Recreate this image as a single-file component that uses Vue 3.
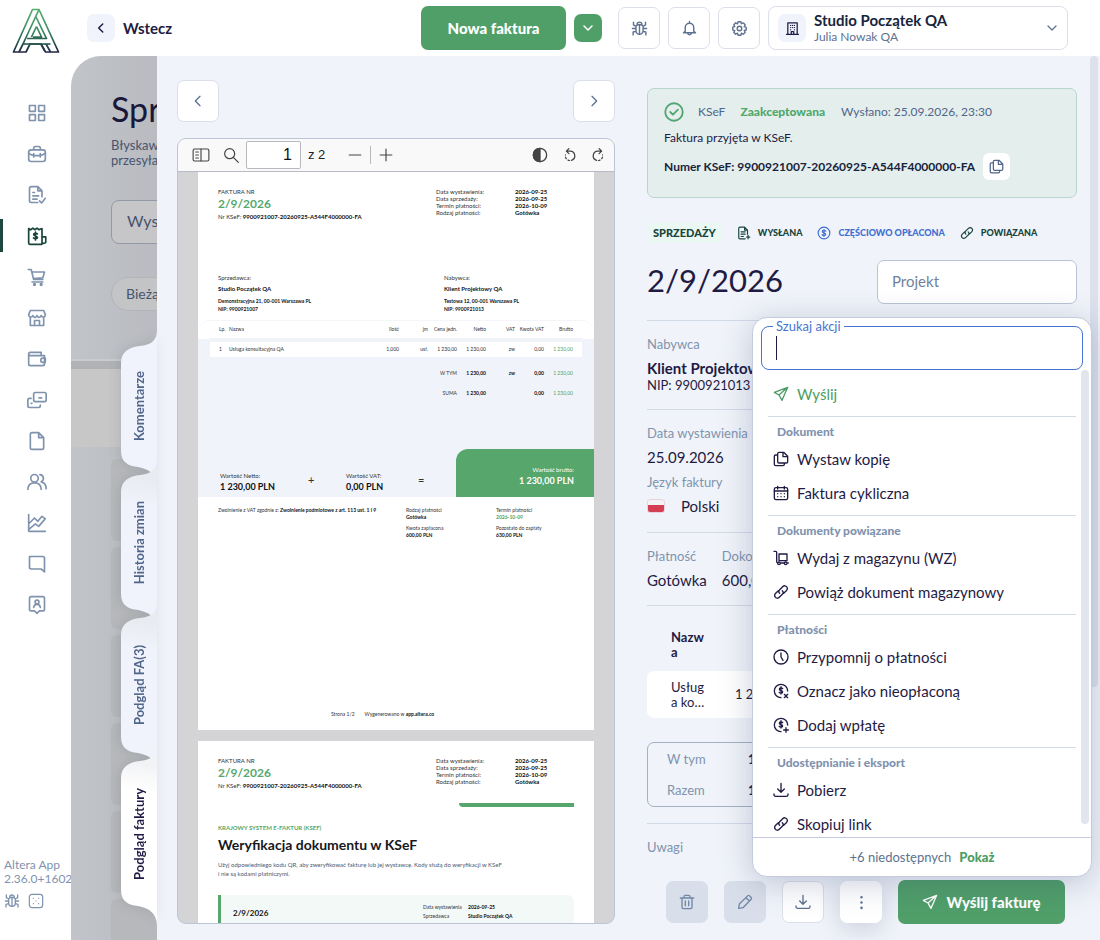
<script setup>
import { h, ref } from 'vue'

const icons = {
  grid: '<rect x="3" y="3" width="7" height="7"/><rect x="14" y="3" width="7" height="7"/><rect x="3" y="14" width="7" height="7"/><rect x="14" y="14" width="7" height="7"/>',
  briefcase: '<rect x="2" y="7" width="20" height="14" rx="3"/><path d="M8 7V5a2 2 0 0 1 2-2h4a2 2 0 0 1 2 2v2M2 11c3 3 6 3 10 3s7 0 10-3M8 11.500v4M16 11.500v4"/>',
  docCheck: '<path d="M13 21H5a2 2 0 0 1-2-2V4a2 2 0 0 1 2-2h8l5 5v7M13 2v5h5M7 9h2M7 13h7M7 17h5M15 19l2.500 2.500L22 16"/>',
  invoice: '<path d="M2 3l2.500 1.500L7 2.500l2.500 2L12 2.500l2.500 2L18 3v19H4a2 2 0 0 1-2-2zM18 13h4.500v6.500a2.500 2.500 0 0 1-4.500 0"/><path d="M12.500 9.500c-.7-1-4.500-1.200-4.500.8 0 2.200 4.500 1.200 4.500 3.400 0 2-3.800 2-4.700.6M10.200 7.300v9.400"/>',
  cart: '<path d="M1.500 3H5l3 12h11M6 6h15l-2 7L7.500 14"/><path d="M6 18h13"/><circle cx="9" cy="21" r="1"/><circle cx="17" cy="21" r="1"/>',
  shop: '<path d="M4 3h16l2 5c0 3-4 4-5 1-1 3-4 3-5 0-1 3-4 3-5 0-1 3-5 2-5-1zM4 11v10h16V11M9 21v-6h6v6"/>',
  wallet: '<path d="M2 6a2 2 0 0 1 2-2h13v4M2 6v12a2 2 0 0 0 2 2h15a2 2 0 0 0 2-2V8H4a2 2 0 0 1-2-2zM22 11h-3a2.500 2.500 0 0 0 0 5h3z"/>',
  cards: '<rect x="8" y="3" width="15" height="11" rx="2"/><path d="M5 10H3a2 2 0 0 0-2 2v7a2 2 0 0 0 2 2h11a2 2 0 0 0 2-2v-1M14.500 9.500h3M5 16h1"/>',
  file: '<path d="M14 2H6a2 2 0 0 0-2 2v16a2 2 0 0 0 2 2h12a2 2 0 0 0 2-2V8zM14 2v6h6"/>',
  users: '<circle cx="9" cy="7.500" r="4.500"/><path d="M1 21c0-5 3-8 8-8s8 3 8 8M15.500 3.200a4.500 4.500 0 0 1 1.500 8.600c3.500.7 6 4 6 8.200"/>',
  chart: '<path d="M2 2v20h20M3 12l6-6 4 4 5-6 4 3M3 19l7-6 4 3 7-8"/>',
  chat: '<path d="M3 3h16a2 2 0 0 1 2 2v16.500L17 18H5a2 2 0 0 1-2-2z"/>',
  contact: '<path d="M5 2h14a2 2 0 0 1 2 2v13a2 2 0 0 1-2 2h-4l-3 3-3-3H5a2 2 0 0 1-2-2V4a2 2 0 0 1 2-2z"/><circle cx="12" cy="8.500" r="2.300"/><path d="M8 15c.5-5 7.500-5 8 0"/>',
  bug: '<path d="M8.500 6.500a3.500 3.500 0 0 1 7 0M7 8.500c3-2.500 7-2.500 10 0v6.500a5 5 0 0 1-10 0zM12 8v12M7 12H2M7 16l-4 1v4M7 9L3.500 7V3M17 12h5M17 16l4 1v4M17 9l3.500-2V3"/>',
  dice: '<rect x="2" y="2" width="20" height="20" rx="4"/><path d="M8 8h.1M16 8h.1M12 12h.1M8 16h.1M16 16h.1"/>',
  left: '<path d="M15 5l-7 7 7 7"/>',
  right: '<path d="M9 5l7 7-7 7"/>',
  down: '<path d="M4 8l8 8 8-8"/>',
  bell: '<path d="M12 2v2M6 16v-5.500a6 6 0 0 1 12 0V16l2.500 2H3.500zM9.500 18.500a2.500 2.500 0 0 0 5 0"/>',
  gear: '<circle cx="12" cy="12" r="3.200"/><path d="M10 2.500h4l.8 2.700 2.800-1.100 2.500 2.900-1.500 2.400 2.900 1.100v3.600l-2.800.7 1.300 2.700-2.700 2.600-2.500-1.500-.9 2.900h-3.800l-.9-2.800-2.700 1.400-2.600-2.700 1.400-2.500-2.800-.9V10l2.800-.8L4 6.600l2.600-2.700L9.200 5.400z"/>',
  building: '<path d="M4.500 21.500V3h15v18.500M2.500 21.500h19M10 21v-4h4v4"/><path d="M9 7h.1M12 7h.1M15 7h.1M9 10.500h.1M12 10.500h.1M15 10.500h.1M9 14h.1M15 14h.1"/>',
  copy: '<path d="M9 2h7l6 6v8a2 2 0 0 1-2 2H9a2 2 0 0 1-2-2V4a2 2 0 0 1 2-2zM15 2v6.500h7M7 6H4a2 2 0 0 0-2 2v12a2 2 0 0 0 2 2h11a2 2 0 0 0 2-2v-2"/>',
  okCircle: '<circle cx="12" cy="12" r="10.500"/><path d="M7.500 12l3.200 3.200 6-6"/>',
  docOut: '<path d="M14 22H5a2 2 0 0 1-2-2V4a2 2 0 0 1 2-2h8l5 5v7M13 2v5h5M7 10h7M7 14h7M7 18h4M19 22v-6M16.500 19H22"/>',
  coin: '<circle cx="12" cy="12" r="10"/><path d="M15 9c-1-2-6-2-6 .5 0 3 6 1.800 6 4.800 0 2.800-5 2.500-6.200.5M12 6v12"/>',
  link: '<path d="M10 14c-2-2-1.500-4 0-5.500l4.500-4.500c4-4 9.500 2 5.500 6l-4 4M14 10c2 2 1.500 4 0 5.500L9.500 20c-4 4-9.500-2-5.500-6l4-4"/>',
  send: '<path d="M22 2L2 9.500l7 4 4.500 8zM22 2L9 13.500"/>',
  calendar: '<rect x="2" y="4" width="20" height="18" rx="2.500"/><path d="M2 9h20M7 2v4M17 2v4"/><path d="M7 13h.1M12 13h.1M17 13h.1M7 17.500h.1M12 17.500h.1M17 17.500h.1"/>',
  trolley: '<path d="M1.500 2H4a1.500 1.500 0 0 1 1.500 1.500V17a2 2 0 0 0 1 2h.5M12 19.500h5M9 6h12v10H9zM22 19.500h1"/><circle cx="9" cy="20" r="2"/><circle cx="19" cy="20" r="2"/>',
  clock: '<circle cx="12" cy="12" r="10.500"/><path d="M12 6v6l3 5"/>',
  coinX: '<path d="M12 22A10 10 0 1 1 22 12"/><path d="M14.500 8.500c-1-1.500-5-1.500-5 .7 0 2.600 5 1.600 5 4.200 0 2.200-4 2.200-5.200.5M12 5.500v11M17 17l5 5M22 17l-5 5"/>',
  coinPlus: '<path d="M12 22A10 10 0 1 1 22 12"/><path d="M14.500 8.500c-1-1.500-5-1.500-5 .7 0 2.600 5 1.600 5 4.200 0 2.200-4 2.200-5.200.5M12 5.500v11M19.500 16v7M16 19.500h7"/>',
  download: '<path d="M12 2v13M7 10.500l5 5 5-5M1.500 18v1a2.500 2.500 0 0 0 2.500 2.500h16a2.500 2.500 0 0 0 2.500-2.500v-1"/>',
  trash: '<path d="M2 6h20M7.500 6V4a2 2 0 0 1 2-2h5a2 2 0 0 1 2 2v2M4.500 6v14a2 2 0 0 0 2 2h11a2 2 0 0 0 2-2V6M9.500 10.500v7M14.500 10.500v7"/>',
  pencil: '<path d="M2.500 21.500l1-6.500L16 2.800a2 2 0 0 1 2.800 0l2.400 2.400a2 2 0 0 1 0 2.800L9 20.500zM13.500 5.500l5 5"/>',
  more: '<path d="M12 3.500v.1M12 12v.1M12 20.500v.1"/>',
  panel: '<rect x="1.500" y="4" width="21" height="16" rx="2"/><path d="M12 4v16M5 8h3.500M5 12h3.500M5 16h3.500"/>',
  search: '<circle cx="10" cy="10" r="7.500"/><path d="M15.500 15.500L23 23"/>',
  minus: '<path d="M2 12h20"/>',
  plus: '<path d="M2 12h20M12 2v20"/>',
  contrast: '<circle cx="12" cy="12" r="10"/><path d="M12 2a10 10 0 0 0 0 20z" fill="currentColor"/>',
  rotL: '<path d="M11 1L7 5l4 4M7.500 5H13a7.500 7.500 0 0 1 2 14.700"/><path d="M12 20a7.500 7.500 0 0 1-6.500-9" stroke-dasharray="2.500 3.500"/>',
  rotR: '<path d="M13 1l4 4-4 4M16.500 5H11a7.500 7.500 0 0 0-2 14.700"/><path d="M12 20a7.500 7.500 0 0 0 6.500-9" stroke-dasharray="2.500 3.500"/>',
}

const Icon = (props) =>
  h('svg', {
    viewBox: '0 0 24 24',
    width: props.size || 18,
    height: props.size || 18,
    fill: 'none',
    stroke: 'currentColor',
    'stroke-width': props.weight || 2,
    'stroke-linecap': 'round',
    'stroke-linejoin': 'round',
    'aria-hidden': 'true',
    innerHTML: icons[props.name],
  })
Icon.props = ['name', 'size', 'weight']

const nav = [
  ['grid', 'Pulpit'], ['briefcase', 'Firma'], ['docCheck', 'Dokumenty'], ['invoice', 'Sprzedaż'],
  ['cart', 'Zakupy'], ['shop', 'Magazyn'], ['wallet', 'Portfel'], ['cards', 'Płatności'],
  ['file', 'Pliki'], ['users', 'Klienci'], ['chart', 'Raporty'], ['chat', 'Wiadomości'], ['contact', 'Kontakt'],
]

const tabs = [
  { label: 'Komentarze', height: 121 },
  { label: 'Historia zmian', height: 135 },
  { label: 'Podgląd FA(3)', height: 135 },
  { label: 'Podgląd faktury', height: 145, active: true },
]
const tabShape = (n) =>
  `M36 -16C36 -4 28 -1 19 0C8 1 0 6 0 17V${n - 16}C0 ${n - 5} 7 ${n - 1} 17 ${n}C28 ${n + 2} 36 ${n + 7} 36 ${n + 20}Z`

const menu = [
  { title: '', items: [['send', 'Wyślij']] },
  { title: 'Dokument', items: [['copy', 'Wystaw kopię'], ['calendar', 'Faktura cykliczna']] },
  { title: 'Dokumenty powiązane', items: [['trolley', 'Wydaj z magazynu (WZ)'], ['link', 'Powiąż dokument magazynowy']] },
  { title: 'Płatności', items: [['clock', 'Przypomnij o płatności'], ['coinX', 'Oznacz jako nieopłaconą'], ['coinPlus', 'Dodaj wpłatę']] },
  { title: 'Udostępnianie i eksport', items: [['download', 'Pobierz'], ['link', 'Skopiuj link']] },
]

const dates = [
  ['Data wystawienia:', '2026-09-25'],
  ['Data sprzedaży:', '2026-09-25'],
  ['Termin płatności:', '2026-10-09'],
  ['Rodzaj płatności:', 'Gotówka'],
]
const query = ref('')
const project = ref('')
const page = ref('1')
</script>

<template>
  <div class="app">
    <aside class="side">
      <a class="logo" href="#" aria-label="Altera">
        <svg viewBox="0 0 48 46" width="48" height="46" fill="none" stroke="url(#brand)" stroke-width="1.700" stroke-linejoin="round">
          <defs>
            <linearGradient id="brand" gradientUnits="userSpaceOnUse" x1="0" y1="0" x2="0" y2="46">
              <stop offset="0" stop-color="#55b06c" /><stop offset=".5" stop-color="#3b8a63" />
              <stop offset=".8" stop-color="#1f4a48" /><stop offset="1" stop-color="#211d45" />
            </linearGradient>
          </defs>
          <path d="M20.500 1.500H27L46.500 44H33.500L29 36H18L14 44H1.500z" />
          <path d="M27 1.500L11 36H38.500M24 9L34.500 30.500H15M24.500 18.500L19.500 29M24.500 18.500L29.500 29H21M11 36L7 44M29 36L32.500 42.500M34 36L38.500 44" />
        </svg>
      </a>
      <nav class="nav">
        <a v-for="[icon, name] in nav" :key="icon" href="#" :class="{ on: icon === 'invoice' }" :aria-label="name">
          <Icon :name="icon" :size="20" />
        </a>
      </nav>
      <div class="version">
        <p>Altera App</p>
        <p>2.36.0+1602</p>
        <div class="version-icons"><Icon name="bug" :size="16" /><Icon name="dice" :size="16" weight="1.800" /></div>
      </div>
    </aside>

    <header class="top">
      <button class="back"><span><Icon name="left" :size="14" weight="2.500" /></span>Wstecz</button>
      <button class="primary new">Nowa faktura</button>
      <button class="primary split" aria-label="Więcej"><Icon name="down" :size="12" weight="3" /></button>
      <div class="tools">
        <button class="square" aria-label="Zgłoś błąd"><Icon name="bug" :size="17" /></button>
        <button class="square" aria-label="Powiadomienia"><Icon name="bell" :size="17" /></button>
        <button class="square" aria-label="Ustawienia"><Icon name="gear" :size="17" /></button>
      </div>
      <button class="account">
        <span class="avatar"><Icon name="building" :size="15" /></span>
        <span class="who"><b>Studio Początek QA</b><small>Julia Nowak QA</small></span>
        <Icon name="down" :size="12" weight="2.500" />
      </button>
    </header>

    <main class="main">
      <section class="under">
        <h1>Sprzedaż</h1>
        <p>Błyskawicznie<br />przesyłaj</p>
        <div class="u-search">Wyszukaj</div>
        <div class="u-chip">Bieżący</div>
        <div class="u-track"></div>
        <div class="u-band"></div>
        <div v-for="n in 6" :key="n" class="u-card"></div>
      </section>

      <section class="drawer">
        <nav class="tabs">
          <button v-for="(t, i) in tabs" :key="t.label" :class="{ on: t.active }" :style="{ height: t.height + 'px' }">
            <svg width="36" :height="t.height" aria-hidden="true">
              <defs>
                <linearGradient :id="'tab' + i" gradientUnits="userSpaceOnUse" x1="4" y1="0" x2="0" y2="28">
                  <stop offset="0" :stop-color="t.active ? '#f2f3f5' : i ? '#e8ebf0' : '#f0f3fb'" />
                  <stop offset="1" :stop-color="t.active ? '#ffffff' : '#f0f3fb'" />
                </linearGradient>
              </defs>
              <path :d="tabShape(t.height)" :fill="`url(#tab${i})`" />
            </svg>
            <span>{{ t.label }}</span>
          </button>
        </nav>

        <div class="preview">
          <div class="pager">
            <button class="square" aria-label="Poprzednia"><Icon name="left" :size="16" /></button>
            <button class="square" aria-label="Następna"><Icon name="right" :size="16" /></button>
          </div>
          <div class="viewer">
            <div class="bar">
              <Icon name="panel" :size="18" weight="1.500" />
              <Icon name="search" :size="16" weight="1.800" />
              <input v-model="page" aria-label="Strona" />
              <span class="of">z 2</span>
              <Icon name="minus" :size="14" />
              <i></i>
              <Icon name="plus" :size="14" />
              <span class="bar-right">
                <Icon name="contrast" :size="16" /><Icon name="rotL" :size="15" /><Icon name="rotR" :size="15" />
              </span>
            </div>
            <div class="canvas">
              <article class="sheet">
                <div class="s-head">
                  <div>
                    <p>FAKTURA NR</p>
                    <h3>2/9/2026</h3>
                    <p>Nr KSeF: <b>9900921007-20260925-A544F4000000-FA</b></p>
                  </div>
                  <dl><template v-for="[k, v] in dates" :key="k"><dt>{{ k }}</dt><dd>{{ v }}</dd></template></dl>
                </div>
                <div class="parties">
                  <div><p>Sprzedawca:</p><h4>Studio Początek QA</h4><b>Demonstracyjna 21, 00-001 Warszawa PL<br />NIP: 9900921007</b></div>
                  <div><p>Nabywca:</p><h4>Klient Projektowy QA</h4><b>Testowa 12, 00-001 Warszawa PL<br />NIP: 9900921013</b></div>
                </div>
                <div class="lines">
                  <table>
                    <colgroup><col class="c1" /><col /><col class="c3" /><col class="c4" /><col class="c4" /><col class="c4" /><col class="c4" /><col class="c4" /><col class="c4" /></colgroup>
                    <thead><tr><th>Lp.</th><th>Nazwa</th><th>Ilość</th><th>jm</th><th>Cena jedn.</th><th>Netto</th><th>VAT</th><th>Kwota VAT</th><th>Brutto</th></tr></thead>
                    <tbody>
                      <tr class="item"><td>1</td><td>Usługa konsultacyjna QA</td><td>1,000</td><td>usł.</td><td>1 230,00</td><td>1 230,00</td><td>zw</td><td>0,00</td><td class="g">1 230,00</td></tr>
                      <tr class="sum"><td colspan="5">W TYM</td><td><b>1 230,00</b></td><td><b>zw</b></td><td><b>0,00</b></td><td class="g">1 230,00</td></tr>
                      <tr class="sum"><td colspan="5">SUMA</td><td><b>1 230,00</b></td><td></td><td><b>0,00</b></td><td class="g">1 230,00</td></tr>
                    </tbody>
                  </table>
                  <div class="totals">
                    <div><p>Wartość Netto:</p><b>1 230,00 PLN</b></div>
                    <span>+</span>
                    <div><p>Wartość VAT:</p><b>0,00 PLN</b></div>
                    <span>=</span>
                    <div class="gross"><p>Wartość brutto:</p><b>1 230,00 PLN</b></div>
                  </div>
                </div>
                <div class="terms">
                  <p>Zwolnienie z VAT zgodnie z: <b>Zwolnienie podmiotowe z art. 113 ust. 1 i 9</b></p>
                  <div><p>Rodzaj płatności</p><b>Gotówka</b><p>Kwota zapłacona</p><b>600,00 PLN</b></div>
                  <div><p>Termin płatności</p><b class="g">2026-10-09</b><p>Pozostało do zapłaty</p><b>630,00 PLN</b></div>
                </div>
                <footer><span>Strona 1/2</span><span>Wygenerowano w <b>app.altera.co</b></span></footer>
              </article>

              <article class="sheet second">
                <div class="s-head">
                  <div>
                    <p>FAKTURA NR</p>
                    <h3>2/9/2026</h3>
                    <p>Nr KSeF: <b>9900921007-20260925-A544F4000000-FA</b></p>
                  </div>
                  <dl><template v-for="[k, v] in dates" :key="k"><dt>{{ k }}</dt><dd>{{ v }}</dd></template></dl>
                </div>
                <div class="strip"></div>
                <p class="over">KRAJOWY SYSTEM E-FAKTUR (KSEF)</p>
                <h2>Weryfikacja dokumentu w KSeF</h2>
                <p class="lead">Użyj odpowiedniego kodu QR, aby zweryfikować fakturę lub jej wystawcę. Kody służą do weryfikacji w KSeF<br />i nie są kodami płatniczymi.</p>
                <div class="verify">
                  <b>2/9/2026</b>
                  <dl><dt>Data wystawienia</dt><dd>2026-09-25</dd><dt>Sprzedawca</dt><dd>Studio Początek QA</dd></dl>
                </div>
              </article>
            </div>
          </div>
        </div>

        <div class="detail">
          <div class="scroll">
            <div class="ksef">
              <div class="k-row"><Icon name="okCircle" :size="20" weight="2.200" /><span>KSeF</span><b>Zaakceptowana</b><small>Wysłano: 25.09.2026, 23:30</small></div>
              <p>Faktura przyjęta w KSeF.</p>
              <div class="k-num"><b>Numer KSeF: 9900921007-20260925-A544F4000000-FA</b><button aria-label="Kopiuj"><Icon name="copy" :size="15" /></button></div>
            </div>
            <div class="badges">
              <b class="kind">SPRZEDAŻY</b>
              <span><Icon name="docOut" :size="14" />WYSŁANA</span>
              <span class="blue"><Icon name="coin" :size="14" />CZĘŚCIOWO OPŁACONA</span>
              <span><Icon name="link" :size="14" />POWIĄZANA</span>
            </div>
            <div class="title"><h2>2/9/2026</h2><input v-model="project" placeholder="Projekt" aria-label="Projekt" /></div>
            <div class="block buyer"><h6>Nabywca</h6><b>Klient Projektowy QA</b><p>NIP: 9900921013</p></div>
            <div class="block meta">
              <h6>Data wystawienia</h6><p>25.09.2026</p>
              <h6>Język faktury</h6><p class="lang"><i class="flag"></i>Polski</p>
            </div>
            <div class="block pay">
              <div><h6>Płatność</h6><p>Gotówka</p></div>
              <div><h6>Dokonano</h6><p>600,00</p></div>
            </div>
            <div class="block rows">
              <table>
                <thead><tr><th>Nazwa</th><th></th></tr></thead>
                <tbody><tr><td><span>Usługa konsultacyjna</span></td><td>1 230,00</td></tr></tbody>
              </table>
              <dl><dt>W tym</dt><dd>1 230</dd><dt>Razem</dt><dd>1 230</dd></dl>
            </div>
            <div class="block notes"><h6>Uwagi</h6></div>
          </div>
          <span class="thumb"></span>

          <div class="actions">
            <button class="square muted" aria-label="Usuń"><Icon name="trash" :size="16" /></button>
            <button class="square muted" aria-label="Edytuj"><Icon name="pencil" :size="16" /></button>
            <button class="square" aria-label="Pobierz"><Icon name="download" :size="16" /></button>
            <button class="square glow" aria-label="Więcej akcji"><Icon name="more" :size="15" weight="4" /></button>
            <button class="primary sendbtn"><Icon name="send" :size="16" />Wyślij fakturę</button>

            <div class="menu">
              <div class="find">
                <label for="find">Szukaj akcji</label>
                <input id="find" v-model="query" />
                <i class="caret"></i>
              </div>
              <div class="list">
                <div v-for="(g, i) in menu" :key="i" class="group">
                  <h5 v-if="g.title">{{ g.title }}</h5>
                  <button v-for="[icon, name] in g.items" :key="name" :class="{ go: i === 0 }"><Icon :name="icon" :size="16" />{{ name }}</button>
                </div>
              </div>
              <div class="more">+6 niedostępnych <a href="#">Pokaż</a></div>
              <span class="menu-thumb"></span>
            </div>
          </div>
        </div>
      </section>
    </main>
  </div>
</template>

<style>
body { margin: 0; }
</style>

<style scoped>
.app, .app * { box-sizing: border-box; }
.app {
  display: grid; grid-template: 56px minmax(0, 1fr) / 71px minmax(0, 1fr);
  height: 100vh; overflow: hidden; background: #fff; color: #1f1b44;
  font: 14px/18px Lato, "Open Sans", sans-serif;
}
h1, h2, h3, h4, h5, h6, p, dl, dd { margin: 0; }
button { font: inherit; color: inherit; border: 0; padding: 0; background: none; cursor: pointer; }
a { color: inherit; text-decoration: none; }
svg { flex: none; display: block; }

.side { grid-row: 1 / 3; display: flex; flex-direction: column; }
.logo { padding: 8px 0 0 12px; }
.nav { margin-top: 38px; display: flex; flex-direction: column; color: #8093ae; }
.nav a { height: 41px; display: flex; align-items: center; padding-left: 27px; }
.nav a.on { height: 33px; margin: 4px 0; padding-left: 24px; border-left: 3px solid #1d473f; color: #17443b; }
.version { margin: auto 0 31px 4px; font-size: 12px; line-height: 14px; color: #8093ae; white-space: nowrap; }
.version-icons { display: flex; gap: 8px; margin-top: 7px; }

.top { display: flex; align-items: center; padding: 0 32px 0 16px; gap: 8px; }
.back { display: flex; align-items: center; gap: 8px; font-weight: 700; font-size: 15px; margin-right: auto; }
.back span { width: 28px; height: 28px; border-radius: 7px; background: #f0f3fb; display: grid; place-items: center; }
.primary { background: #509f69; color: #fff; font-weight: 900; font-size: 15px; border-radius: 7px; }
.new { width: 145px; height: 44px; }
.split { width: 28px; height: 28px; display: grid; place-items: center; }
.tools { display: flex; gap: 8px; margin-left: 8px; }
.square { width: 42px; height: 42px; border: 1px solid #dbdfea; border-radius: 7px; background: #fff; color: #5d7290; display: grid; place-items: center; }
.account { width: 300px; height: 44px; border: 1px solid #dbdfea; border-radius: 8px; display: flex; align-items: center; gap: 8px; padding: 0 9px; color: #5d7290; text-align: left; }
.avatar { width: 28px; height: 28px; border-radius: 7px; background: #f0f3fb; color: #1f1b44; display: grid; place-items: center; }
.who { flex: 1; display: flex; flex-direction: column; }
.who b { font-size: 15px; line-height: 17px; color: #17243c; }
.who small { font-size: 12px; line-height: 15px; }

.main { position: relative; min-height: 0; }
.under { height: 100%; overflow: hidden; border-radius: 30px 0 0; background: linear-gradient(90deg, #c1c4c9, #b9bbc0 86px); padding-top: 33px; color: #47546e; white-space: nowrap; }
.under h1 { margin-left: 40px; font-weight: 400; font-size: 34px; line-height: 40px; color: #19173a; }
.under p { margin: 9px 0 0 40px; font-size: 13px; line-height: 15px; }
.u-search { margin: 32px 0 0 40px; height: 44px; border: 1px solid #9499a6; border-radius: 8px; padding: 10px 15px; font-size: 16px; line-height: 20px; background: #c6c6c8; }
.u-chip { margin: 33px 0 0 40px; height: 34px; border: 1px solid #b2b4b9; border-radius: 17px; padding: 7px 14px; background: #c3c4c6; }
.u-track { margin-top: 48px; height: 10px; border-top: 2px solid #cacbcd; background: #b0b2b6; }
.u-band { height: 78px; background: #c7c7c8; margin-bottom: 12px; }
.u-card { margin: 0 0 6px 40px; height: 82px; border-radius: 6px; background: #b6b8bb; }

.drawer { position: absolute; inset: 0 0 0 86px; background: #f0f3f9; display: grid; grid-template-columns: minmax(0, 1fr) 430px; gap: 32px; padding: 0 23px 0 20px; }
.tabs { position: absolute; left: -36px; top: 290px; width: 36px; display: flex; flex-direction: column; gap: 8px; filter: drop-shadow(-2px 0 6px rgba(30, 40, 60, .12)); }
.tabs button { position: relative; display: grid; place-items: center; font-weight: 700; font-size: 13px; color: #50658a; }
.tabs svg { position: absolute; left: 0; top: 0; overflow: visible; }
.tabs span { position: relative; writing-mode: vertical-rl; transform: rotate(180deg); white-space: nowrap; }
.tabs .on { color: #1f1b44; }

.preview { display: flex; flex-direction: column; min-height: 0; padding: 24px 0 16px; gap: 16px; }
.pager { display: flex; justify-content: space-between; }
.viewer { flex: 1; min-height: 0; border: 1px solid #bcc5d6; border-radius: 9px; overflow: hidden; background: #d4d4d6; display: flex; flex-direction: column; }
.bar { flex: none; height: 33px; background: #f9f9fa; border-bottom: 1px solid #b9bbc4; display: flex; align-items: center; padding: 0 8px 0 14px; color: #444; font-family: "Liberation Sans", sans-serif; }
.bar > svg + svg { margin-left: 13px; }
.bar input { width: 55px; height: 28px; margin: 0 7px; border: 1px solid #b8b8bf; border-radius: 2px; text-align: right; padding: 0 8px; font: 16px "Liberation Sans", sans-serif; color: #111; background: #fff; }
.of { font-size: 13px; color: #222; margin-right: 23px; }
.bar i { width: 1px; height: 18px; background: #b8b8bf; margin: 0 8px; }
.bar-right { margin-left: auto; display: flex; align-items: center; gap: 14px; }
.canvas { padding: 0 20px; display: flex; flex-direction: column; gap: 11px; min-height: 0; }

.sheet { flex: none; min-height: 558px; background: #fff; color: #333; font-size: 6px; line-height: 7px; display: flex; flex-direction: column; white-space: nowrap; padding-top: 16px; }
.sheet b { color: #111; }
.s-head { display: grid; grid-template-columns: 1fr 158px; padding-left: 20px; }
.s-head h3 { font-size: 12px; line-height: 16px; margin: 1px 0; color: #55a86d; }
.s-head dl { display: grid; grid-template-columns: 79px 1fr; align-content: start; }
.sheet dd { font-weight: 700; color: #111; }
.parties { display: grid; grid-template-columns: 226px 1fr; padding: 54px 0 0 20px; line-height: 7px; }
.parties h4 { font-size: 6px; line-height: 8px; margin: 4px 0; color: #111; }
.parties b { font-size: 5px; }
.lines { margin-top: 7px; border-top: 1px solid #f4f5f9; border-radius: 12px 12px 0 0; background: linear-gradient(#fff 18px, #f0f3f9 18px); }
.lines table { border-collapse: collapse; table-layout: fixed; width: calc(100% - 24px); margin: 0 12px; font-size: 5px; }
.lines th { font-weight: 400; height: 19px; }
.lines th, .lines td { padding: 0; text-align: right; }
.lines th:nth-child(-n+2), .item td:nth-child(-n+2) { text-align: left; }
.lines th:first-child, .item td:first-child { padding-left: 9px; }
.lines th:last-child, .lines td:last-child { padding-right: 9px; }
.c1 { width: 19px; } .c3 { width: 50px; } .c4 { width: 29px; }
.c4:last-child { width: 38px; }
.item td { height: 17px; background: #fff; }
.item { border-top: 4px solid #f0f3f9; }
.sum td { height: 20px; vertical-align: bottom; }
.g, .sheet .g { color: #4fa368; }
.totals { margin-top: 52px; height: 48px; display: grid; grid-template-columns: 104px 22px 88px 22px 1fr; padding-left: 22px; align-items: center; }
.totals p { line-height: 9px; }
.totals b { font-size: 9px; line-height: 13px; }
.totals > div:not(.gross) { padding-top: 18px; }
.totals span { font-size: 11px; padding-top: 12px; margin-left: -16px; }
.gross { justify-self: end; width: 138px; height: 48px; border-radius: 12px 0 0; background: #57a76d; color: #fff; text-align: right; padding: 16px 20px 0 0; margin-right: 1px; }
.sheet .gross b { color: #fff; }
.terms { display: grid; grid-template-columns: 188px 90px 1fr; padding: 10px 0 0 20px; font-size: 5px; }
.terms div b + p { margin-top: 4px; }
.sheet footer { margin: auto auto 12px 133px; display: flex; gap: 10px; font-size: 5px; }
.strip { margin: 14px 20px 0 auto; width: 115px; height: 4px; background: #57a76d; border-bottom-left-radius: 4px; }
.over { margin: 17px 0 0 20px; font-weight: 700; color: #55a86d; }
.second h2 { margin: 5px 0 0 20px; font-size: 14px; line-height: 18px; color: #16181d; }
.lead { margin: 6px 0 0 20px; line-height: 9px; color: #4d5a70; }
.verify { margin: 17px 20px 0 20px; height: 80px; border-left: 3px solid #57a76d; border-radius: 0 6px 0 0; background: #f3f9f6; padding: 8px 0 0 12px; display: grid; grid-template-columns: 190px 1fr; font-size: 5px; line-height: 9px; }
.verify b { font-size: 8px; line-height: 20px; }
.verify dl { display: grid; grid-template-columns: 45px 1fr; align-content: start; }

.detail { position: relative; min-height: 0; display: flex; flex-direction: column; }
.scroll { flex: 1; min-height: 0; overflow: hidden; padding-top: 32px; }
.thumb { position: absolute; right: -21px; top: 0; width: 8px; height: 631px; border-radius: 4px; background: #dce1ec; }
.ksef { border: 1px solid #b8d6cf; border-radius: 7px; background: #e4eeed; height: 110px; padding: 11px 16px; }
.k-row { display: flex; align-items: center; height: 24px; color: #50658a; }
.k-row svg { color: #53a570; margin-right: 14px; }
.k-row span { font-size: 12px; margin-right: 15px; }
.k-row b { color: #4fa86c; font-size: 12px; font-weight: 900; margin-right: 16px; }
.k-row small { font-size: 12px; }
.ksef p { font-size: 12px; line-height: 16px; margin-top: 6px; }
.k-num { display: flex; align-items: center; gap: 8px; margin-top: 7px; font-size: 12px; color: #17243c; }
.k-num button { width: 27px; height: 27px; border-radius: 6px; background: #fff; display: grid; place-items: center; color: #50658a; }
.badges { display: flex; align-items: center; gap: 15px; margin-top: 24px; height: 22px; font-size: 9px; font-weight: 900; color: #17443b; }
.badges span { display: flex; align-items: center; gap: 7px; white-space: nowrap; }
.badges .kind { background: #ebf7f2; border-radius: 4px; padding: 1px 6px; font-size: 11px; }
.badges .blue { color: #3f6fd1; }
.title { display: flex; justify-content: space-between; align-items: center; margin: 16px 0; height: 44px; }
.title h2 { font-weight: 400; font-size: 31px; line-height: 40px; padding-bottom: 4px; }
.title input { width: 200px; height: 44px; border: 1px solid #b9c3d6; border-radius: 7px; padding: 0 14px 2px; background: #fff; font: 15px Lato, sans-serif; }
.title input::placeholder { color: #6f829d; opacity: 1; }
.block { border-top: 1px solid #d2dae6; padding-top: 14px; }
.block h6 { color: #8093ae; font-size: 13px; font-weight: 400; white-space: nowrap; }
.buyer { height: 89px; }
.buyer b { display: block; font-size: 15px; margin-top: 7px; line-height: 17px; }
.buyer p { font-size: 13px; line-height: 16px; }
.meta { height: 123px; }
.meta p { margin: 6px 0 7px; font-size: 15px; }
.lang { display: flex; align-items: center; gap: 16px; }
.flag { width: 18px; height: 14px; border-radius: 3px; background: linear-gradient(#f2f3f5 45%, #d43f53 45%); border: 1px solid #e6d4da; }
.pay { display: flex; gap: 15px; height: 73px; white-space: nowrap; }
.pay p { margin-top: 6px; font-size: 15px; }
.rows { padding-top: 24px; height: 218px; }
.rows table { width: 100%; border-collapse: collapse; table-layout: fixed; font-size: 13px; line-height: 15px; }
.rows th, .rows td { text-align: left; padding: 0; word-break: break-all; }
.rows th:first-child { width: 62px; }
.rows th:first-child, .rows td:first-child { padding-left: 24px; }
.rows th { height: 41px; vertical-align: top; }
.rows td { height: 47px; background: #fff; }
.rows td:first-child { border-radius: 7px 0 0 7px; }
.rows td + td { padding-left: 26px; }
.rows td span { display: -webkit-box; -webkit-box-orient: vertical; -webkit-line-clamp: 2; overflow: hidden; }
.rows dl { margin-top: 24px; border: 1px solid #a3b0c5; border-radius: 7px; height: 65px; padding: 0 19px; display: grid; grid-template-columns: 81px 1fr; align-items: center; color: #8093ae; font-size: 13px; }
.rows dd { font-weight: 700; color: #1f1b44; }

.actions { position: relative; flex: none; display: flex; align-items: center; gap: 16px; padding: 0 12px 16px 19px; height: 60px; }
.muted { background: #d9dfea; border-color: #d9dfea; color: #7187a5; }
.glow { border-color: #fff; box-shadow: 0 6px 24px rgba(50, 70, 120, .2); }
.sendbtn { flex: 1; height: 44px; display: flex; align-items: center; justify-content: center; gap: 8px; }

.menu { position: absolute; right: -15px; bottom: 63px; width: 340px; background: #fff; border: 1px solid #c3cbdc; border-radius: 15px; box-shadow: 0 6px 32px rgba(40, 60, 110, .25); }
.find { position: relative; margin: 8px 8px 0; }
.find input { display: block; width: 100%; height: 44px; border: 1px solid #4674d0; border-radius: 8px; background: #fff; padding: 0 14px; font: 15px Lato, sans-serif; outline: 0; }
.find label { position: absolute; left: 12px; top: -8px; padding: 0 3px; background: #fff; color: #4674d0; font-size: 13px; line-height: 16px; }
.caret { position: absolute; left: 15px; top: 10px; width: 1px; height: 24px; background: #1f1b44; }
.list { height: 467px; overflow: hidden; padding: 8px 15px 0; }
.group + .group { margin-top: 4px; border-top: 1px solid #d2dae6; }
.group h5 { font-size: 12px; line-height: 26px; height: 26px; padding: 2px 0 0 9px; color: #8093ae; font-weight: 900; }
.group button { display: flex; align-items: center; gap: 8px; width: 100%; height: 34px; padding: 0 0 2px 5px; font-size: 15px; }
.group .go { color: #4b9d65; }
.more { border-top: 1px solid #c3cbdc; height: 39px; display: flex; align-items: center; justify-content: center; gap: 8px; font-size: 13px; color: #5d7290; }
.more a { color: #4b9d65; font-weight: 900; }
.menu-thumb { position: absolute; right: 2px; top: 52px; width: 8px; height: 454px; border-radius: 4px; background: #e1e5ed; }
</style>
